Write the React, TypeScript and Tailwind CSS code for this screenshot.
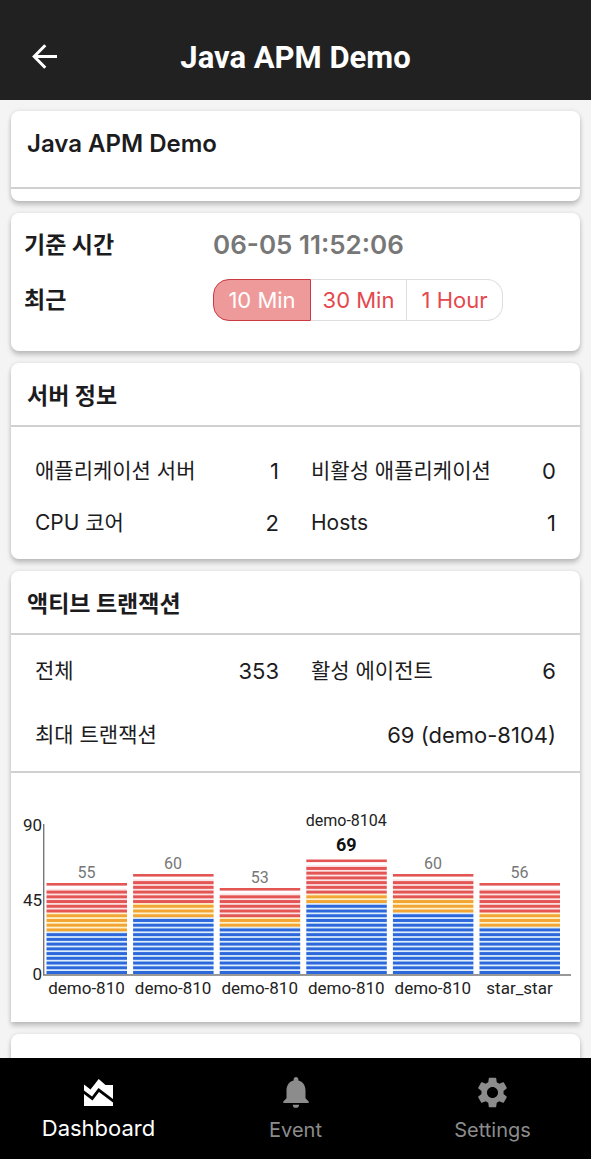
import React, { ReactNode } from "react";
import { MdNotifications, MdSettings } from "react-icons/md";

const BASE = 202;
const PITCH = 4.73;

type Bar = { label: string; total: number; blue: number; orange: number; red: number; top: number; peak?: string };

const bars: Bar[] = [
  { label: "demo-810", total: 55, blue: 9, orange: 4, red: 5, top: 110 },
  { label: "demo-810", total: 60, blue: 12, orange: 3, red: 5, top: 101 },
  { label: "demo-810", total: 53, blue: 10, orange: 2, red: 5, top: 115 },
  { label: "demo-810", total: 69, blue: 15, orange: 2, red: 6, top: 86.5, peak: "demo-8104" },
  { label: "demo-810", total: 60, blue: 13, orange: 3, red: 4, top: 101 },
  { label: "star_star", total: 56, blue: 10, orange: 3, red: 5, top: 110 },
];

function Card({ children, className = "rounded-lg" }: { children?: ReactNode; className?: string }) {
  return (
    <section
      className={`shrink-0 bg-white shadow-[0_4px_5px_rgba(0,0,0,0.2),0_0_4px_rgba(0,0,0,0.1)] ${className}`}
    >
      {children}
    </section>
  );
}

function CardTitle({ children }: { children: ReactNode }) {
  return (
    <h2 className="flex h-16 items-center border-b-2 border-[#d0d0d0] px-4 pt-1 text-[23px] leading-8 font-bold">
      {children}
    </h2>
  );
}

function Stat({ label, value, wide = false }: { label: string; value: string; wide?: boolean }) {
  return (
    <div className={`flex items-center justify-between ${wide ? "col-span-2" : ""}`}>
      <dt className="text-[21px] whitespace-nowrap">{label}</dt>
      <dd className="text-[22px] whitespace-nowrap">{value}</dd>
    </div>
  );
}

function Chart() {
  return (
    <svg viewBox="0 0 569 249" className="block w-full font-[Roboto,sans-serif]" role="img" aria-label="액티브 트랜잭션">
      {bars.map((bar, i) => {
        const x = 35.5 + i * 86.6;
        const center = x + 40;
        const count = bar.blue + bar.orange + bar.red;
        return (
          <g key={i}>
            {Array.from({ length: count }, (_, n) => {
              const y = BASE - 4 - n * PITCH;
              const tone =
                n < bar.blue
                  ? ["#2c67dc", "#dceefa"]
                  : n < bar.blue + bar.orange
                    ? ["#f2a533", "#fdf3cc"]
                    : ["#e35654", "#fce4e6"];
              return (
                <g key={n}>
                  <rect x={x} y={y - 1.8} width="80.5" height="2" fill={tone[1]} />
                  <rect x={x} y={y} width="80.5" height="3" fill={tone[0]} />
                </g>
              );
            })}
            <rect x={x} y={bar.top} width="80.5" height="2.6" fill="#e35654" />
            <text
              x={center}
              y={bar.top - (bar.peak ? 9 : 5)}
              textAnchor="middle"
              fontSize={bar.peak ? 18 : 16}
              fontWeight={bar.peak ? 700 : 400}
              fill={bar.peak ? "#111111" : "#777777"}
            >
              {bar.total}
            </text>
            {bar.peak && (
              <text x={center} y={bar.top - 34} textAnchor="middle" fontSize="16" fill="#222222">
                {bar.peak}
              </text>
            )}
            <text x={center} y="221" textAnchor="middle" fontSize="17" fill="#222222">
              {bar.label}
            </text>
          </g>
        );
      })}
      <path d="M32.7 51V202H560" fill="none" stroke="#777777" strokeWidth="1.4" />
      <g textAnchor="end" fontSize="17" fill="#222222">
        <text x="31" y="58">90</text>
        <text x="31" y="133">45</text>
        <text x="31" y="207">0</text>
      </g>
    </svg>
  );
}

function NavItem({ label, children, active = false }: { label: string; children: ReactNode; active?: boolean }) {
  return (
    <a
      href="#"
      aria-current={active ? "page" : undefined}
      className={`flex flex-1 flex-col items-center ${active ? "text-[22px] leading-7 text-white" : "text-[20px] leading-8 text-[#8c8c8c]"}`}
    >
      <span className="flex h-14 items-center pt-3">{children}</span>
      <span>{label}</span>
    </a>
  );
}

export default function App() {
  return (
    <div className="flex h-screen flex-col bg-[#f4f4f4] font-[Inter,'Noto_Sans_CJK_KR',sans-serif] text-[#1c1c1e]">
      <header className="grid shrink-0 grid-cols-[88px_1fr_88px] items-center bg-[#212121] pt-4 text-white">
        <button type="button" aria-label="Back" className="flex h-[84px] items-center pb-1 pl-8">
          <svg viewBox="0 0 25 25" className="size-[25px]" fill="none" stroke="currentColor" strokeWidth="3">
            <path d="M13.3 1.2L2.2 12.5L13.3 23.8M2.5 12.5H25" />
          </svg>
        </button>
        <h1 className="text-center font-[Roboto,sans-serif] text-[31px] leading-10 font-bold">Java APM Demo</h1>
      </header>

      <main className="flex min-h-0 flex-1 flex-col gap-3 overflow-hidden px-[11px] pt-[11px]">
        <Card className="rounded-lg pb-3">
          <h2 className="h-[78px] border-b-2 border-[#d0d0d0] px-4 pt-[17px] text-[24px] leading-8 font-semibold">
            Java APM Demo
          </h2>
        </Card>

        <Card className="grid grid-cols-[189px_1fr] items-center gap-y-[14px] rounded-lg px-[13px] pt-3 pb-[30px]">
          <span className="text-[23px] leading-10 font-bold">기준 시간</span>
          <time className="text-[26px] leading-10 font-semibold text-[#777777]">06-05 11:52:06</time>
          <span className="text-[23px] leading-10 font-bold">최근</span>
          <div className="flex h-[42px] text-[22px] text-[#e5484d]">
            <button type="button" className="w-[98px] rounded-l-2xl border border-[#c93a42] bg-[#ef9a9a] text-white">
              10 Min
            </button>
            <button type="button" className="w-24 border-y border-r border-[#dedede]">
              30 Min
            </button>
            <button type="button" className="w-24 rounded-r-2xl border-y border-r border-[#dedede]">
              1 Hour
            </button>
          </div>
        </Card>

        <Card>
          <CardTitle>서버 정보</CardTitle>
          <dl className="grid grid-cols-[244px_1fr] gap-x-8 gap-y-5 px-6 pt-7 pb-5 leading-8">
            <Stat label="애플리케이션 서버" value="1" />
            <Stat label="비활성 애플리케이션" value="0" />
            <Stat label="CPU 코어" value="2" />
            <Stat label="Hosts" value="1" />
          </dl>
        </Card>

        <Card className="rounded-t-lg">
          <CardTitle>액티브 트랜잭션</CardTitle>
          <dl className="grid grid-cols-[244px_1fr] gap-x-8 gap-y-8 border-b-2 border-[#d0d0d0] px-6 py-5 leading-8">
            <Stat label="전체" value="353" />
            <Stat label="활성 에이전트" value="6" />
            <Stat label="최대 트랜잭션" value="69 (demo-8104)" wide />
          </dl>
          <Chart />
        </Card>

        <Card className="h-24 rounded-lg" />
      </main>

      <nav className="flex h-[101px] shrink-0 bg-black">
        <NavItem label="Dashboard" active>
          <svg viewBox="0 0 29 27" className="h-[27px] w-[29px]" fill="currentColor">
            <path d="M0 5.5L6.5 10.5L14.7 0L21.5 6H29V20L14.5 9L8 17.5L0 11.5Z" />
            <path d="M0 15L8.5 21.5L15 13L29 23.5V27H0Z" />
          </svg>
        </NavItem>
        <NavItem label="Event">
          <MdNotifications size={38} />
        </NavItem>
        <NavItem label="Settings">
          <MdSettings size={37} />
        </NavItem>
      </nav>
    </div>
  );
}
